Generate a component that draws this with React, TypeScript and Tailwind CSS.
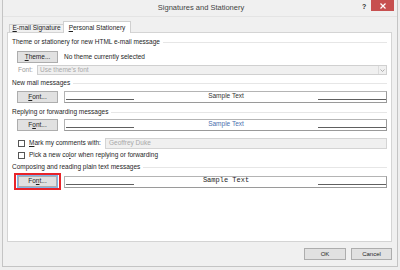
import React from "react";

const F = { fontFamily: '"Liberation Sans", Arial, sans-serif' };

function Ul({ label, u }: { label: string; u: number }) {
  return (
    <span className="whitespace-nowrap">
      {label.slice(0, u)}
      <span className="underline">{label[u]}</span>
      {label.slice(u + 1)}
    </span>
  );
}

function Btn({ label, u }: { label: string; u: number }) {
  return (
    <div className="w-[41px] h-[12px] shrink-0 border border-[#adadad] bg-[#e1e1e1] flex items-center justify-center text-[6.5px] leading-none text-[#1e1e1e]">
      <Ul label={label} u={u} />
    </div>
  );
}

function Heading({ text, mt }: { text: string; mt: string }) {
  return (
    <div className={`flex items-center gap-[3px] text-[6.5px] leading-none text-[#1e1e1e] h-[10px] ${mt}`}>
      <span className="whitespace-nowrap">{text}</span>
      <div className="flex-1 h-px bg-[#e6e6e6]" />
    </div>
  );
}

function Sample({ color, mono }: { color: string; mono?: boolean }) {
  return (
    <div className="flex-1 h-[12px] border border-[#b4b4b4] border-r-[#9a9a9a] border-b-[#9a9a9a] bg-white flex items-end pb-[2px] relative">
      <div className="w-[68px] ml-[1px] h-px bg-[#606060]" />
      <div className="flex-1 flex justify-center self-center">
        <span
          className={mono ? "text-[7px] leading-none" : "text-[6.5px] leading-none"}
          style={
            mono
              ? { fontFamily: '"Liberation Mono", "DejaVu Sans Mono", monospace', color }
              : { color }
          }
        >
          Sample Text
        </span>
      </div>
      <div className="w-[68px] h-px bg-[#606060]" />
    </div>
  );
}

export default function App() {
  return (
    <div style={F} className="w-[400px] h-[270px] bg-[#eeeeee] pl-[2px] overflow-hidden">
      <div className="w-[396px] h-[267px] border-x border-b border-[#c4c4c4] bg-[#f0f0f0] flex flex-col">
        {/* title bar */}
        <div className="h-[17px] shrink-0 relative border-b border-[#e4e4e4]">
          <div className="absolute left-0 right-0 top-[4px] text-center text-[7.5px] leading-none text-[#444] pl-[2px]">
            Signatures and Stationery
          </div>
          <div className="absolute left-[359px] top-[3px] text-[7px] leading-none font-bold text-[#333]">?</div>
          <div className="absolute left-[368px] top-0 w-[23px] h-[11px] bg-[#c75050] flex items-center justify-center">
            <svg width="6" height="6" viewBox="0 0 6 6">
              <path d="M0.5 0.5 L5.5 5.5 M5.5 0.5 L0.5 5.5" stroke="#fff" strokeWidth="1.2" />
            </svg>
          </div>
        </div>
        <div className="pl-[4px] pr-[5px] pt-[4px] flex flex-col">
          {/* tabs */}
          <div className="flex items-end h-[11px] pl-[2px] text-[6.5px] leading-none text-[#1e1e1e]">
            <div className="h-[8px] w-[54px] border-t border-l border-[#d0d0d0] bg-[#f0f0f0] flex items-center justify-center">
              <Ul label="E-mail Signature" u={0} />
            </div>
            <div className="h-[12px] w-[68px] border-t border-x border-[#d0d0d0] bg-white flex items-center justify-center -mb-px relative z-10 pt-[2px]">
              <Ul label="Personal Stationery" u={0} />
            </div>
          </div>
          {/* panel */}
          <div className="border border-[#d4d4d4] bg-white h-[210px] pl-[4px] pr-[4px] pt-[4px] flex flex-col">
            <Heading text="Theme or stationery for new HTML e-mail message" mt="mt-0" />
            <div className="flex items-center h-[12px] mt-[4px] pl-[5px] gap-[6px]">
              <Btn label="Theme..." u={0} />
              <span className="text-[6.5px] leading-none text-[#1e1e1e] whitespace-nowrap">No theme currently selected</span>
            </div>
            <div className="flex items-center h-[10px] mt-[2px] pl-[6px]">
              <span className="text-[6.5px] leading-none text-[#9a9a9a] w-[19px]">Font:</span>
              <div className="flex-1 h-[10px] border border-[#d0d0d0] bg-[#f0f0f0] flex items-center pl-[2px] text-[6.5px] leading-none text-[#a8a8a8]">
                <span className="flex-1 whitespace-nowrap">Use theme&apos;s font</span>
                <div className="w-[8px] h-[8px] border-l border-[#dcdcdc] flex items-center justify-center">
                  <svg width="5" height="3" viewBox="0 0 5 3">
                    <path d="M0.5 0.5 L2.5 2.5 L4.5 0.5" stroke="#a0a0a0" fill="none" strokeWidth="0.8" />
                  </svg>
                </div>
              </div>
            </div>
            <Heading text="New mail messages" mt="mt-[3px]" />
            <div className="flex items-center h-[12px] mt-[3px] pl-[5px] gap-[6px]">
              <Btn label="Font..." u={0} />
              <Sample color="#333333" />
            </div>
            <Heading text="Replying or forwarding messages" mt="mt-[4px]" />
            <div className="flex items-center h-[12px] mt-[2px] pl-[5px] gap-[6px]">
              <Btn label="Font..." u={1} />
              <Sample color="#4a6fae" />
            </div>
            <div className="flex items-center h-[11px] mt-[7px] pl-[6px]">
              <div className="w-[7px] h-[7px] border border-[#555] bg-white mr-[4px] shrink-0" />
              <span className="text-[6.5px] leading-none text-[#1e1e1e] w-[76px] whitespace-nowrap">
                <Ul label="Mark my comments with:" u={0} />
              </span>
              <div className="flex-1 h-[11px] border border-[#d4d4d4] bg-[#f0f0f0] flex items-center pl-[3px] text-[6.5px] leading-none text-[#a8a8a8]">
                Geoffrey Duke
              </div>
            </div>
            <div className="flex items-center h-[9px] mt-[2px] pl-[6px]">
              <div className="w-[7px] h-[7px] border border-[#555] bg-white mr-[4px] shrink-0" />
              <span className="text-[6.5px] leading-none text-[#1e1e1e] whitespace-nowrap">
                <Ul label="Pick a new color when replying or forwarding" u={13} />
              </span>
            </div>
            <Heading text="Composing and reading plain text messages" mt="mt-[2px]" />
            <div className="flex items-center h-[17px] mt-[1px] pl-[2px] gap-[3px]">
              <div className="w-[47px] h-[17px] border-2 border-[#e8242a] flex items-center justify-center shrink-0">
                <div className="border border-[#7eb4ea]">
                  <div className="w-[39px] h-[11px] border border-[#adadad] bg-[#e1e1e1] flex items-center justify-center text-[6.5px] leading-none text-[#1e1e1e]">
                    <Ul label="Font..." u={2} />
                  </div>
                </div>
              </div>
              <Sample color="#1e1e1e" mono />
            </div>
          </div>
          {/* bottom buttons */}
          <div className="flex justify-end gap-[5px] mt-[6px]">
            <div className="w-[42px] h-[12px] border border-[#adadad] bg-[#e1e1e1] flex items-center justify-center text-[6px] leading-none text-[#1e1e1e]">OK</div>
            <div className="w-[41px] h-[12px] border border-[#adadad] bg-[#e1e1e1] flex items-center justify-center text-[6px] leading-none text-[#1e1e1e]">Cancel</div>
          </div>
        </div>
      </div>
    </div>
  );
}
